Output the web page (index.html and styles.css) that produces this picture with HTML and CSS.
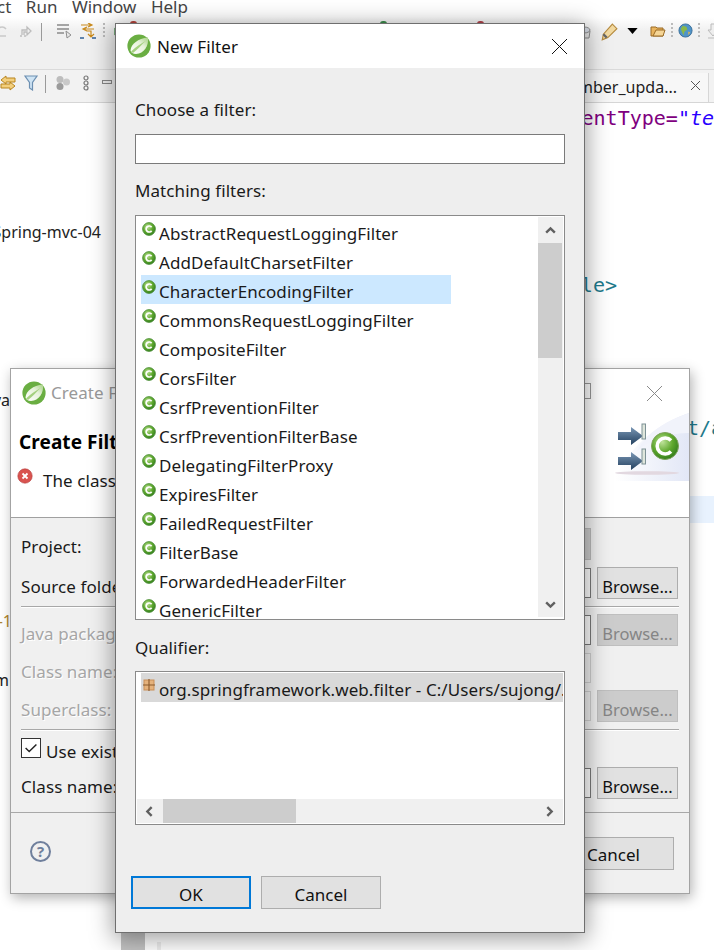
FILE: index.html
```html
<!DOCTYPE html>
<html lang="en">
<head>
<meta charset="utf-8">
<title>New Filter</title>
<link rel="stylesheet" href="styles.css">
</head>
<body>
<svg class="defs" width="0" height="0" aria-hidden="true">
  <defs>
    <radialGradient id="ballG" cx="40%" cy="35%" r="70%">
      <stop offset="0" stop-color="#bfe39a"/><stop offset=".55" stop-color="#5fa82e"/><stop offset="1" stop-color="#2e7a1a"/>
    </radialGradient>
    <linearGradient id="arrowG" x1="0" y1="0" x2="0" y2="1">
      <stop offset="0" stop-color="#7a97b5"/><stop offset="1" stop-color="#23405f"/>
    </linearGradient>
    <linearGradient id="bannerG" x1="0" y1="0" x2="1" y2="0">
      <stop offset="0" stop-color="#fff"/><stop offset="1" stop-color="#e2e7f6"/>
    </linearGradient>
    <linearGradient id="leafG" x1="0" y1="1" x2="1" y2="0">
      <stop offset="0" stop-color="#fff"/><stop offset=".6" stop-color="#e6f2da"/><stop offset="1" stop-color="#a6d184"/>
    </linearGradient>
    <symbol id="cls" viewBox="0 0 14 14">
      <circle cx="7" cy="7" r="6.4" fill="url(#ballG)" stroke="#4c8f3a" stroke-width=".8"/>
      <path d="M9.6 5.3A3 3 0 1 0 9.6 8.7" fill="none" stroke="#fff" stroke-width="1.7"/>
    </symbol>
    <symbol id="leaf" viewBox="0 0 24 24">
      <circle cx="12" cy="12" r="11.600" fill="#6aae42"/>
      <path d="M21 3.500C22 12 17 19.500 9 20 6 20 4 18.500 3.500 16.500 4 10 11 4.500 21 3.500Z" fill="url(#leafG)"/>
      <path d="M4 17.500C9 12.500 13.500 10 18.500 7 14.500 11 10.500 15.500 6 19Z" fill="#a4d07f"/>
    </symbol>
    <symbol id="browse-arrow" viewBox="0 0 12 12">
      <path d="M2 8L6 4L10 8" fill="none" stroke="#606060" stroke-width="2.200"/>
    </symbol>
  </defs>
</svg>

<div class="app">
  <nav class="menu"><span class="menu-cut">ct</span><span>Run</span><span>Window</span><span>Help</span></nav>

  <div class="toolbar">
    <i class="peek peek-a"></i><i class="peek peek-b"></i><i class="peek peek-c"></i>
    <div class="tools">
      <svg class="ti ti-first" viewBox="0 0 16 16"><path d="M3 8a5 5 0 0 1 9-3M12 12H3" fill="none" stroke="#c9c9c9" stroke-width="1.500"/></svg>
      <svg class="ti" viewBox="0 0 16 16"><path d="M3 13h2M7 13h2M5 12V7h5V4l4 4-4 4V9H7v3" fill="none" stroke="#bdbdbd" stroke-width="1.300"/></svg>
      <i class="sep-v"></i>
      <svg class="ti" viewBox="0 0 16 16"><path d="M0 2h12M0 6h12M0 10h7" stroke="#8a8a8a" stroke-width="1.400" fill="none"/><path d="M9 8l5 4-4 3z" fill="#e8e8e8" stroke="#8f8f8f"/></svg>
      <svg class="ti" viewBox="0 0 16 16"><path d="M1 2h11M8 0l4 2-4 2M14 6H3M7 4L3 6l4 2M6 8h5v5M8 11l3 3 3-3" fill="none" stroke="#c98a1c" stroke-width="1.200"/><path d="M0 15h4M12 15h4" stroke="#2f5f96" stroke-width="1.300"/></svg>
      <i class="dots"></i>
      <svg class="ti ti-boot" viewBox="0 0 16 16"><path d="M8 1l6 3.400v7.200L8 15l-6-3.400V4.400z" fill="#0e8a16" stroke="#0a6a10"/><circle cx="8" cy="8" r="3.500" fill="none" stroke="#fff" stroke-width="1.200"/><path d="M8 4v4" stroke="#fff" stroke-width="1.200"/></svg>
    </div>
    <div class="tools tools-right">
      <svg class="r-pail" viewBox="0 0 16 16"><path d="M2 7h12l-1 7H3z" fill="#e6e6e6" stroke="#8d8d8d"/><ellipse cx="8" cy="6" rx="6" ry="3" fill="#d8dde6" stroke="#8d8d8d"/></svg>
      <svg class="r-pen" viewBox="0 0 16 16"><path d="M11 1l4 4-8 8-5 2 1-5z" fill="#f2d9a0" stroke="#b58a3e"/><path d="M3 10l3 3" stroke="#666" stroke-width="2"/></svg>
      <svg class="r-caret" viewBox="0 0 12 7"><path d="M0 0h12L6 7z" fill="#000"/></svg>
      <svg class="r-folder" viewBox="0 0 16 14"><path d="M1 3h5l1 1h6v8H1z" fill="#e9b45e" stroke="#9a6a24"/><path d="M3 12l3-6h9l-2 6z" fill="#f5d596" stroke="#9a6a24"/></svg>
      <i class="r-dots"></i>
      <svg class="r-globe" viewBox="0 0 16 16"><circle cx="8" cy="8" r="7" fill="#4f94c9" stroke="#3b6f99"/><path d="M5 3l4 1 1 3-3 2-1 4-2-4-1-3z" fill="#8ab84a"/><path d="M11 9l2 1-2 3z" fill="#e6b64a"/></svg>
      <i class="r-dots"></i>
      <svg class="r-last" viewBox="0 0 16 16"><path d="M6 1h4v6h3l-5 6-5-6h3zM3 15h10" fill="#eee" stroke="#bbb"/></svg>
    </div>
  </div>

  <div class="viewbar">
    <div class="tools">
      <svg class="ti ti-swap" viewBox="0 0 16 16"><path d="M6 1L1 5l5 4V7h9V3H6zM10 7l5 4-5 4v-2H1V9h9z" fill="#f3cf7d" stroke="#b9851f"/></svg>
      <svg class="ti" viewBox="0 0 14 16"><path d="M1 1h12L8.500 7.500V15l-3-2V7.500z" fill="#cfe4f4" stroke="#6d90b2" stroke-width="1.200"/></svg>
      <i class="sep-v"></i>
      <svg class="ti" viewBox="0 0 16 16"><circle cx="5" cy="4.500" r="3.500" fill="#bdbdbd"/><circle cx="11.500" cy="7" r="3.500" fill="#c9c9c9"/><circle cx="5" cy="11.500" r="3.500" fill="#9b9b9b"/></svg>
      <svg class="ti" viewBox="0 0 16 16"><circle cx="8" cy="3" r="2" fill="none" stroke="#777" stroke-width="1.200"/><circle cx="8" cy="8" r="2" fill="none" stroke="#777" stroke-width="1.200"/><circle cx="8" cy="13" r="2" fill="none" stroke="#777" stroke-width="1.200"/></svg>
      <i class="min-box"></i>
    </div>
    <div class="tab"><span>member_upda...</span><svg class="tab-x" viewBox="0 0 9 9"><path d="M0 0L9 9M9 0L0 9" stroke="#555" fill="none"/></svg></div>
  </div>

  <div class="editor">
    <span class="frag frag-proj">Spring-mvc-04</span>
    <span class="frag frag-va">Java</span>
    <span class="frag frag-one">-1</span>
    <span class="frag frag-m">m</span>
    <span class="code code-ct">contentType=<b>"te</b></span>
    <span class="code code-le">title&gt;</span>
    <span class="code code-ta">t/a</span>
    <i class="code-line"></i>
    <i class="gutter"></i>
  </div>
</div>

<section class="win back">
  <header class="back-title">
    <svg class="leaf"><use href="#leaf"/></svg>
    <span class="back-title-text">Create Filter</span>
    <i class="max-box"></i>
    <svg class="x x-back" viewBox="0 0 15 15"><path d="M0 0L15 15M15 0L0 15" stroke="#8a8a8a" fill="none"/></svg>
  </header>
  <div class="back-head">
    <h1>Create Filter</h1>
    <p class="err">
      <svg class="err-ico" viewBox="0 0 16 16"><circle cx="8" cy="8" r="7.200" fill="#d9534f" stroke="#b33a3a" stroke-width=".6"/><path d="M5.500 5.500l5 5M10.500 5.500l-5 5" stroke="#fff" stroke-width="1.800"/></svg>
      <span>The class</span>
    </p>
    <svg class="banner" viewBox="0 0 74 68">
      <path d="M0 64C18 30 44 10 74 0V68H0Z" fill="url(#bannerG)"/>
      <path d="M22 38C36 26 54 20 74 20V0C50 8 32 20 22 38Z" fill="#f1f3fb"/>
      <ellipse cx="32" cy="60" rx="32" ry="1.800" fill="#e2d8e0"/>
      <path d="M3 19h13v-5l12 9-12 9v-5H3z" fill="url(#arrowG)"/>
      <path d="M3 44h13v-5l12 9-12 9v-5H3z" fill="url(#arrowG)"/>
      <rect x="27" y="11" width="3.500" height="15" fill="#dfe6dc" stroke="#7e9296"/>
      <rect x="27" y="36" width="3.500" height="15" fill="#dfe6dc" stroke="#7e9296"/>
      <circle cx="50" cy="33" r="13.500" fill="url(#ballG)" stroke="#7fa35c"/>
      <path d="M56 27.500A8 8 0 1 0 56 38.500" fill="none" stroke="#fff" stroke-width="3.500"/>
    </svg>
  </div>
  <div class="back-form">
    <div class="frow frow-first"><label>Project:</label><span class="fbox fbox-fill"></span><span class="spacer"></span></div>
    <div class="frow"><label>Source folder:</label><span class="fbox"></span><button class="btn">Browse...</button></div>
    <hr class="fsep">
    <div class="frow off"><label>Java package:</label><span class="fbox"></span><button class="btn btn-off">Browse...</button></div>
    <div class="frow off"><label>Class name:</label><span class="fbox fbox-off"></span><span class="spacer"></span></div>
    <div class="frow off"><label>Superclass:</label><span class="fbox fbox-off"></span><button class="btn btn-off">Browse...</button></div>
    <hr class="fsep">
    <div class="frow-check">
      <span class="check"><svg viewBox="0 0 20 20"><path d="M4 10l4 4 8-8" fill="none" stroke="#222" stroke-width="1.600"/></svg></span>
      <span class="check-text">Use existing</span>
    </div>
    <div class="frow"><label>Class name:</label><span class="fbox"></span><button class="btn">Browse...</button></div>
  </div>
  <footer class="back-foot">
    <span class="help">?</span>
    <button class="btn btn-cancel-back">Cancel</button>
  </footer>
</section>

<section class="win front">
  <header class="front-title">
    <svg class="leaf"><use href="#leaf"/></svg>
    <span class="front-title-text">New Filter</span>
    <svg class="x" viewBox="0 0 15 15"><path d="M0 0L15 15M15 0L0 15" stroke="#111" fill="none"/></svg>
  </header>
  <div class="front-body">
    <label class="l l-choose">Choose a filter:</label>
    <div class="input"></div>
    <label class="l l-match">Matching filters:</label>
    <div class="list">
      <ul class="rows">
        <li><svg class="cls"><use href="#cls"/></svg>AbstractRequestLoggingFilter</li>
        <li><svg class="cls"><use href="#cls"/></svg>AddDefaultCharsetFilter</li>
        <li class="on"><svg class="cls"><use href="#cls"/></svg>CharacterEncodingFilter</li>
        <li><svg class="cls"><use href="#cls"/></svg>CommonsRequestLoggingFilter</li>
        <li><svg class="cls"><use href="#cls"/></svg>CompositeFilter</li>
        <li><svg class="cls"><use href="#cls"/></svg>CorsFilter</li>
        <li><svg class="cls"><use href="#cls"/></svg>CsrfPreventionFilter</li>
        <li><svg class="cls"><use href="#cls"/></svg>CsrfPreventionFilterBase</li>
        <li><svg class="cls"><use href="#cls"/></svg>DelegatingFilterProxy</li>
        <li><svg class="cls"><use href="#cls"/></svg>ExpiresFilter</li>
        <li><svg class="cls"><use href="#cls"/></svg>FailedRequestFilter</li>
        <li><svg class="cls"><use href="#cls"/></svg>FilterBase</li>
        <li><svg class="cls"><use href="#cls"/></svg>ForwardedHeaderFilter</li>
        <li><svg class="cls"><use href="#cls"/></svg>GenericFilter</li>
      </ul>
      <div class="vbar">
        <svg class="arr" viewBox="0 0 12 12"><use href="#browse-arrow"/></svg>
        <div class="vtrack"><i class="vthumb"></i></div>
        <svg class="arr arr-down" viewBox="0 0 12 12"><use href="#browse-arrow"/></svg>
      </div>
    </div>
    <label class="l l-qual">Qualifier:</label>
    <div class="qlist">
      <div class="qrow">
        <svg class="pkg" viewBox="0 0 12 12"><rect x="1" y="1" width="10" height="10" fill="#e5b27c" stroke="#c98f58"/><path d="M6 0v12M0 6h12" stroke="#8a5a2c" stroke-width="1.100"/></svg>
        <span class="qtext">org.springframework.web.filter - C:/Users/sujong/.</span>
      </div>
      <div class="hbar">
        <svg class="arr arr-left" viewBox="0 0 12 12"><use href="#browse-arrow"/></svg>
        <div class="htrack"><i class="hthumb"></i></div>
        <svg class="arr arr-right" viewBox="0 0 12 12"><use href="#browse-arrow"/></svg>
      </div>
    </div>
    <div class="actions">
      <button class="btn act act-ok">OK</button>
      <button class="btn act">Cancel</button>
    </div>
  </div>
</section>
</body>
</html>
```
FILE: styles.css
```css
* { box-sizing: border-box; }
html, body { margin: 0; padding: 0; }
body {
  width: 714px; height: 950px; overflow: hidden; position: relative;
  background: #fff; color: #1a1a1a;
  font: 17px/24px "Noto Sans", "Open Sans", sans-serif;
}
.defs { position: absolute; }
ul { list-style: none; margin: 0; padding: 0; }
h1, p { margin: 0; }
hr { border: 0; margin: 0; }

/* background IDE */
.app { width: 714px; height: 950px; display: flex; flex-direction: column; overflow: hidden; }
.menu { height: 17px; display: flex; gap: 14.5px; margin-left: -3px; line-height: 14px; color: #444; overflow: hidden; flex: none; }
.toolbar { height: 53px; flex: none; display: flex; justify-content: space-between; padding: 6px 0 0 0; position: relative;
  background: linear-gradient(#fff, #f0f0f0 14px); border-bottom: 1px solid #dadada; }
.peek { position: absolute; top: 4px; width: 7px; height: 4px; border-radius: 3px 3px 0 0; }
.peek-a { left: 130px; background: #b5443c; }
.peek-b { left: 380px; background: #3c8f4c; }
.peek-c { left: 477px; background: #b5444c; }
.tools { display: flex; align-items: flex-start; }
.ti { width: 16px; height: 16px; margin-top: 0; flex: none; }
.toolbar .tools > .ti:not(.ti-first) { margin-left: 7px; }
.ti-first { margin-left: -6px; margin-top: 1px; }
.toolbar .tools > .ti-boot { width: 16px; height: 17px; margin-left: 6px; }
.sep-v { width: 1px; height: 18px; background: #9a9a9a; margin: 0 8px 0 8px; flex: none; }
.dots { width: 2px; height: 15px; margin: 0 1px 0 7px; flex: none;
  background: repeating-linear-gradient(#bbb 0 2px, transparent 2px 4px); }
.tools-right { width: 146px; margin-right: -8px; }
.r-pail { width: 16px; height: 16px; margin: 1px 0 0 0; flex: none; }
.r-pen { width: 18px; height: 18px; margin: 0 0 0 8px; flex: none; }
.r-caret { width: 11px; height: 6px; margin: 5px 0 0 9px; flex: none; }
.r-folder { width: 16px; height: 14px; margin: 1px 0 0 12px; flex: none; }
.r-dots { width: 2px; height: 15px; margin: 0 5px; flex: none;
  background: repeating-linear-gradient(#bbb 0 2px, transparent 2px 4px); }
.r-globe { width: 15px; height: 15px; flex: none; }
.r-last { width: 16px; height: 16px; margin-left: 0; flex: none; }
.viewbar { height: 33px; flex: none; display: flex; justify-content: space-between; padding-top: 4px;
  background: #f2f2f2; border-bottom: 1px solid #d6d6d6; position: relative; }
.viewbar .tools { padding-top: 1px; }
.viewbar .ti { margin-right: 7px; }
.viewbar .sep-v { margin: 0 9px 0 -1px; }
.min-box { width: 10px; height: 4px; border: 1px solid #888; background: #eee; margin: 5px 0 0 1px; }
.tab { width: 132px; height: 29px; font-size: 16px; line-height: 24px; white-space: nowrap; background: #f7f7f7;
  border-right: 1px solid #d6d6d6; color: #222; display: flex; justify-content: flex-end; align-items: flex-start; padding: 2px 8px 0 0; margin-right: 5px; margin-top: -1px; }
.tab-x { width: 9px; height: 9px; margin: 6px 0 0 14px; flex: none; }
.editor { flex: 1; position: relative; background: #fff; }
.frag { position: absolute; white-space: nowrap; line-height: 24px; color: #222; font-size: 16px; }
.frag-proj { right: 613px; top: 117px; }
.frag-va { right: 704px; top: 285px; }
.frag-one { right: 702px; top: 506px; color: #b0852f; }
.frag-m { right: 705px; top: 565px; }
.code { position: absolute; white-space: nowrap; font: 20px/24px "DejaVu Sans Mono", monospace; }
.code-ct { right: 0; top: 3px; color: #7f007f; }
.code-ct b { color: #2a00ff; font-style: italic; font-weight: normal; }
.code-le { right: 97px; top: 170px; color: #1f7a8c; }
.code-ta { left: 687px; top: 313px; color: #1f7a8c; }
.code-line { position: absolute; left: 600px; right: 0; top: 393px; height: 27px; background: #e8f2fe; }
.gutter { position: absolute; left: 121px; top: 829px; width: 24px; height: 30px; background: #c4c4c4;
  box-shadow: 26px 0 0 -10px #eee; }

/* windows */
.win { position: absolute; background: #f0f0f0; display: flex; flex-direction: column; letter-spacing: .08px; }
.back { left: 10px; top: 368px; width: 680px; height: 526px; border: 1px solid #a3a3a3; box-shadow: 2px 4px 12px rgba(0,0,0,.3); }
.front { left: 115px; top: 23px; width: 470px; height: 910px; border: 1px solid #6f6f6f; background: #eee; box-shadow: 0 4px 22px 2px rgba(0,0,0,.38); }
.leaf { width: 24px; height: 24px; flex: none; }

.back-title { height: 48px; flex: none; background: #fff; display: flex; align-items: center; padding: 0 27px 0 11px; position: relative; color: #999; }
.back-title-text { margin-left: 5px; flex: 1; }
.max-box { position: absolute; left: 573px; top: 14px; width: 7px; height: 16px; border: 1px solid #999; border-left: 0; }
.x { width: 15px; height: 15px; flex: none; }
.back-head { height: 101px; flex: none; background: #fff; border-bottom: 1px solid #a0a0a0; position: relative; padding: 12px 0 0 8px; }
.back-head h1 { font-size: 19px; line-height: 26px; font-weight: 700; color: #000; white-space: nowrap; }
.err { display: flex; align-items: flex-start; margin: 13px 0 0 -2px; }
.err-ico { width: 16px; height: 16px; flex: none; }
.err span { margin: 1px 0 0 10px; line-height: 24px; }
.banner { position: absolute; right: 0; top: -4px; width: 74px; height: 68px; }

.back-form { padding: 10px 11px 0 10px; display: flex; flex-direction: column; gap: 6px; flex: none; height: 294px; }
.frow { height: 32px; display: flex; align-items: center; flex: none; }
.frow-first { margin-bottom: 1px; }
.frow label { width: 110px; flex: none; white-space: nowrap; padding-top: 8px; }
.frow-first label { padding-top: 6px; }
.fbox { flex: 1; height: 30px; background: #fff; border: 1px solid #7a7a7a; }
.fbox-fill { height: 32px; background: #ccc; border-color: #bbb; }
.fbox-off { border-color: #d0d0d0; background: #f0f0f0; }
.spacer, .frow .btn { width: 81px; margin-left: 6px; flex: none; }
.frow.off { color: #a6a6a6; text-shadow: 1px 1px 0 #fff; }
.fsep { height: 1px; margin: 1px -1px 1px 0; background: #a8a8a8; box-shadow: 0 1px 0 #fff; flex: none; }
.frow-check { height: 22px; display: flex; align-items: center; gap: 5px; margin-bottom: 2px; flex: none; white-space: nowrap; }
.check-text { padding-top: 8px; }
.check { width: 20px; height: 20px; border: 1px solid #333; background: #fff; flex: none; display: flex; }
.check svg { width: 18px; height: 18px; }
.btn { height: 32px; padding: 5px 0 0; background: #e1e1e1; border: 1px solid #adadad; color: #111; font: 17px/24px "Noto Sans", "Open Sans", sans-serif; white-space: nowrap; }
.frow .btn { font-size: 16.5px; padding-top: 7px; }
.btn-off { background: #ccc; border-color: #bfbfbf; color: #858585; text-shadow: none; }
.back-foot { flex: 1; border-top: 1px solid #a8a8a8; position: relative; display: flex; justify-content: flex-end; align-items: flex-start; padding: 24px 15px 0 0; }
.help { position: absolute; left: 19px; top: 28px; width: 21px; height: 21px; border-radius: 50%; border: 2px solid #6f7f9c; color: #6f7f9c; font-weight: 700; font-size: 15px; line-height: 17px; text-align: center; }
.btn-cancel-back { width: 180px; height: 33px; text-align: right; padding: 3px 33px 0 0; }

.front-title { height: 44px; flex: none; background: #fff; display: flex; align-items: center; padding: 0 17px 0 11px; }
.front-title-text { flex: 1; margin-left: 6px; color: #111; padding-top: 2px; }
.front-body { flex: 1; padding: 30px 19px 0; display: flex; flex-direction: column; }
.l { display: block; line-height: 24px; flex: none; }
.input { height: 30px; margin-top: 12px; background: #fff; border: 1px solid #7a7a7a; flex: none; }
.l-match { margin-top: 15px; }
.list { height: 405px; margin-top: 12px; background: #fff; border: 1px solid #8a8a8a; flex: none; display: flex; justify-content: space-between; overflow: hidden; padding: 1px 1px 2px 5px; }
.rows { width: 310px; overflow: hidden; }
.rows li { height: 29px; display: flex; align-items: center; white-space: nowrap; padding-top: 4px; line-height: 25px; }
.rows li.on { background: #cce8ff; }
.cls { width: 14px; height: 14px; margin: -10px 3px 0 1px; flex: none; }
.vbar { width: 25px; background: #f0f0f0; display: flex; flex-direction: column; align-items: center; flex: none; }
.arr { width: 13px; height: 13px; flex: none; }
.vbar .arr { margin: 7px 0 6px; }
.vbar .arr-down { transform: rotate(180deg); }
.vtrack { flex: 1; width: 100%; }
.vthumb { display: block; width: 24px; height: 115px; background: #cdcdcd; }
.l-qual { margin-top: 16px; }
.qlist { height: 154px; margin-top: 11px; background: #fff; border: 1px solid #8a8a8a; flex: none; display: flex; flex-direction: column; padding: 1px; overflow: hidden; }
.qrow { height: 29px; flex: none; background: #d9d9d9; margin-left: 4px; display: flex; align-items: center; overflow: hidden; white-space: nowrap; margin-bottom: 97px; padding-top: 4px; line-height: 25px; }
.pkg { width: 12px; height: 12px; margin: -10px 4px 0 2px; flex: none; }
.hbar { height: 24px; flex: none; background: #f0f0f0; display: flex; align-items: center; justify-content: space-between; }
.arr-left { transform: rotate(-90deg); margin: 0 7px 0 6px; }
.arr-right { transform: rotate(90deg); margin: 0 7px 0 6px; }
.htrack { flex: 1; height: 24px; }
.hthumb { display: block; width: 133px; height: 24px; background: #cdcdcd; }
.actions { margin: 51px 0 0 -4px; display: flex; gap: 10px; flex: none; }
.act { width: 120px; height: 33px; }
.act-ok { border: 2px solid #0078d7; }
```
